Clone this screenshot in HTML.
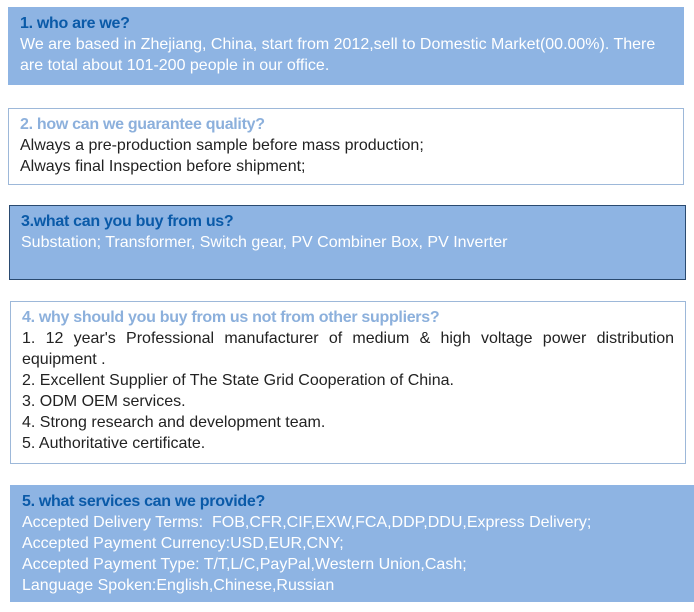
<!DOCTYPE html>
<html><head><style>
body{margin:0;width:694px;height:612px;background:#fff;font-family:"Liberation Sans",Arial,sans-serif;font-size:16px;letter-spacing:0;line-height:21px;position:relative;overflow:hidden}
.b{position:absolute;box-sizing:border-box;padding:3px 0 0 12px}
h{display:block;font-weight:bold;letter-spacing:-0.3px}
.blue{background:#8eb4e3;color:#fff}
.blue h{color:#0a5aa8}
.wh{background:#fff;border:1px solid #9db8d9;color:#222}
.wh h{color:#8cb0dc}
</style></head><body>
<div class="b blue" style="left:8px;top:7px;width:676px;height:78px;padding-top:6px"><h>1. who are we?</h>We are based in Zhejiang, China, start from 2012,sell to Domestic Market(00.00%). There<br>are total about 101-200 people in our office.</div>
<div class="b wh" style="left:8px;top:108px;width:676px;height:77px;padding-top:5px;padding-left:11px"><h>2. how can we guarantee quality?</h>Always a pre-production sample before mass production;<br>Always final Inspection before shipment;</div>
<div class="b blue" style="left:9px;top:205px;width:677px;height:75px;border:1px solid #2a4a70;padding-top:5px;padding-left:11px"><h>3.what can you buy from us?</h>Substation; Transformer, Switch gear, PV Combiner Box, PV Inverter</div>
<div class="b wh" style="left:10px;top:301px;width:676px;height:163px;padding:5px 11px 0 11px"><h>4. why should you buy from us not from other suppliers?</h><div style="text-align:justify;text-align-last:justify">1. 12 year's Professional manufacturer of medium &amp; high voltage power distribution</div>equipment .<br>2. Excellent Supplier of The State Grid Cooperation of China.<br>3. ODM OEM services.<br>4. Strong research and development team.<br>5. Authoritative certificate.</div>
<div class="b blue" style="left:10px;top:485px;width:684px;height:117px;padding-top:6px"><h>5. what services can we provide?</h>Accepted Delivery Terms:&nbsp; FOB,CFR,CIF,EXW,FCA,DDP,DDU,Express Delivery;<br>Accepted Payment Currency:USD,EUR,CNY;<br>Accepted Payment Type: T/T,L/C,PayPal,Western Union,Cash;<br>Language Spoken:English,Chinese,Russian</div>
</body></html>
